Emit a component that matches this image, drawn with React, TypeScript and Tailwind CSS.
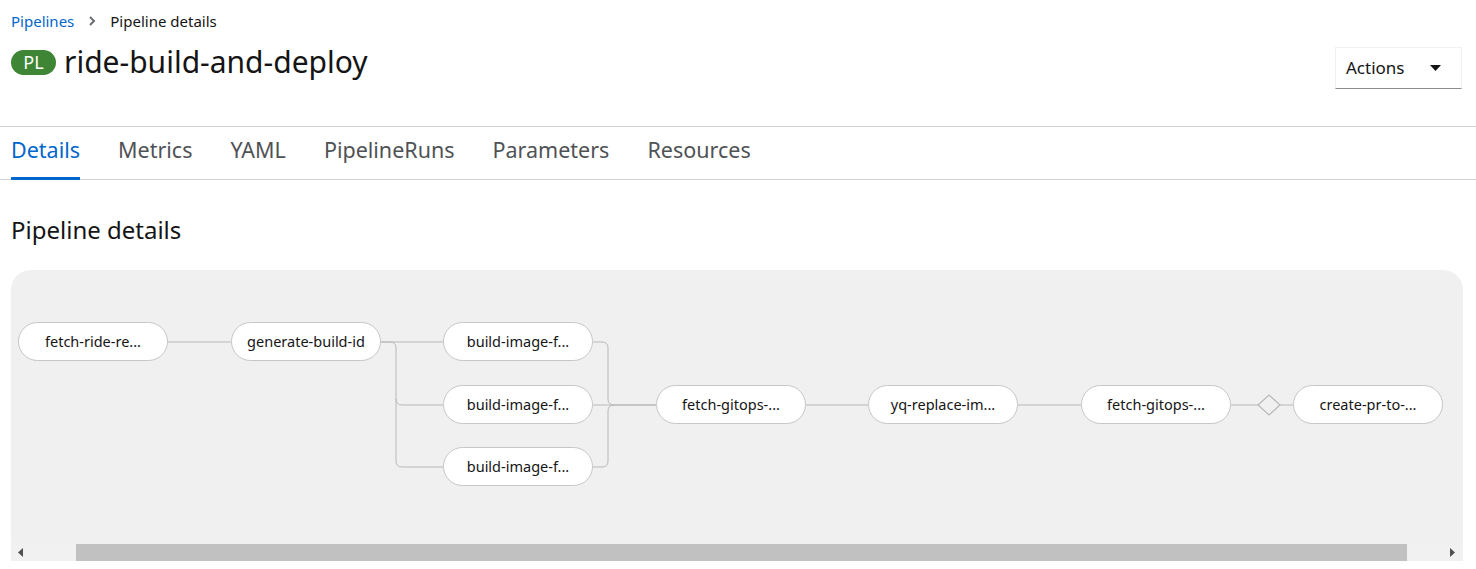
import React from "react";

const nodes = [
  { x: 7, y: 52, label: "fetch-ride-re..." },
  { x: 220, y: 52, label: "generate-build-id" },
  { x: 432, y: 52, label: "build-image-f..." },
  { x: 432, y: 115, label: "build-image-f..." },
  { x: 432, y: 177, label: "build-image-f..." },
  { x: 645, y: 115, label: "fetch-gitops-..." },
  { x: 857, y: 115, label: "yq-replace-im..." },
  { x: 1070, y: 115, label: "fetch-gitops-..." },
  { x: 1282, y: 115, label: "create-pr-to-..." },
];

const tabs = ["Details", "Metrics", "YAML", "PipelineRuns", "Parameters", "Resources"];

export default function App() {
  return (
    <div className="w-[1476px] h-[569px] bg-white overflow-hidden" style={{ fontFamily: "'Noto Sans', 'Open Sans', sans-serif" }}>
      <div className="px-[11px] pt-[11px]">
        <div className="flex items-center text-[15px] leading-[20px] h-[20px]">
          <span className="text-[#0066cc]">Pipelines</span>
          <svg width="8" height="10" viewBox="0 0 8 10" className="mx-[14px]">
            <path d="M2 1 L6 5 L2 9" stroke="#6a6e73" strokeWidth="2" fill="none" />
          </svg>
          <span className="text-[#151515]">Pipeline details</span>
        </div>
        <div className="flex items-start justify-between">
          <div className="flex items-center mt-[13px]">
            <span className="bg-[#3e8635] text-white rounded-full w-[45px] h-[25px] flex items-center justify-center text-[18px] leading-none">PL</span>
            <h1 className="ml-[8px] text-[30px] leading-[36px] text-[#151515]">ride-build-and-deploy</h1>
          </div>
          <div className="mt-[16px] mr-[3px] w-[127px] h-[42px] border border-[#f0f0f0] border-b-[#8a8d90] flex items-center justify-between pl-[10px] pr-[20px]">
            <span className="text-[17px] text-[#151515]">Actions</span>
            <svg width="11" height="6" viewBox="0 0 11 6"><path d="M0 0 L11 0 L5.5 6 Z" fill="#151515" /></svg>
          </div>
        </div>
      </div>
      <div className="mt-[37px] border-t border-[#d2d2d2]" />
      <div className="flex gap-[38px] px-[11px] border-b border-[#d2d2d2] h-[53px]">
        {tabs.map((t, i) => (
          <div key={t} className={"relative flex items-center pb-[6px] text-[21.5px] " + (i === 0 ? "text-[#0066cc]" : "text-[#4f5255]")}>
            {t}
            {i === 0 && <div className="absolute left-0 right-0 bottom-[-1px] h-[3px] bg-[#0066cc]" />}
          </div>
        ))}
      </div>
      <div className="px-[11px]">
        <h2 className="mt-[34px] text-[24px] leading-[32px] text-[#151515]">Pipeline details</h2>
        <div className="mt-[24px] w-[1452px] rounded-t-[20px] bg-[#f0f0f0] overflow-hidden">
          <div className="relative h-[273px]">
            <svg className="absolute left-0 top-0" width="1452" height="273" fill="none" stroke="#b8b8b8" strokeWidth="1">
              <path d="M157 72 H220" />
              <path d="M370 72 H432" />
              <path d="M370 72 H379 Q385 72 385 78 V129 Q385 135 391 135 H432" />
              <path d="M385 129 V191 Q385 197 391 197 H432" />
              <path d="M582 72 H591 Q597 72 597 78 V129 Q597 135 603 135 H645" />
              <path d="M582 197 H591 Q597 197 597 191 V141 Q597 135 603 135" />
              <path d="M582 135 H645" />
              <path d="M795 135 H857" />
              <path d="M1007 135 H1070" />
              <path d="M1220 135 H1247" />
              <path d="M1247 135 L1258 125 L1269 135 L1258 145 Z" fill="#f0f0f0" strokeWidth="1.2" />
              <path d="M1269 135 H1282" />
            </svg>
            {nodes.map((n, i) => (
              <div
                key={i}
                className="absolute w-[150px] h-[39px] rounded-full bg-white border border-[#c6c6c6] flex items-center justify-center text-[14.5px] text-[#151515]"
                style={{ left: n.x, top: n.y }}
              >
                {n.label}
              </div>
            ))}
          </div>
          <div className="h-[18px] flex items-center bg-[#f1f1f1]">
            <div className="w-[65px] h-full flex items-center pl-[7px]">
              <svg width="5" height="9" viewBox="0 0 5 9"><path d="M5 0 L0 4.5 L5 9 Z" fill="#505050" /></svg>
            </div>
            <div className="w-[1331px] h-[17px] bg-[#c1c1c1]" />
            <div className="flex-1 h-full flex items-center justify-end pr-[8px]">
              <svg width="5" height="9" viewBox="0 0 5 9"><path d="M0 0 L5 4.5 L0 9 Z" fill="#505050" /></svg>
            </div>
          </div>
        </div>
      </div>
    </div>
  );
}
